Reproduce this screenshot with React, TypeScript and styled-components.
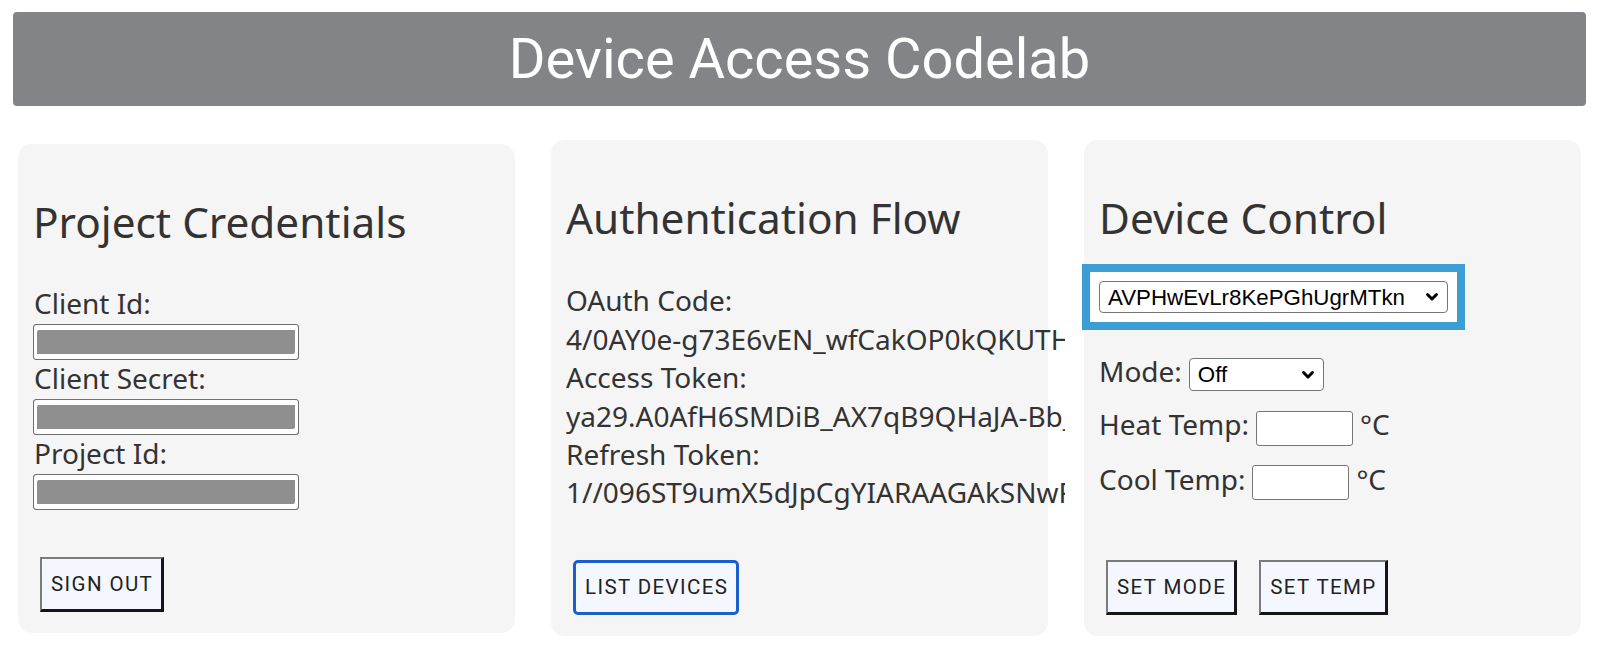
import React from "react";
import styled, { createGlobalStyle } from "styled-components";

const GlobalStyle = createGlobalStyle`
  html, body {
    margin: 0;
    padding: 0;
    background: #ffffff;
  }
  body {
    font-family: "Noto Sans", "Open Sans", sans-serif;
    color: #333333;
  }
`;

const Page = styled.div`
  width: 1600px;
  height: 651px;
  overflow: hidden;
  box-sizing: border-box;
  padding-top: 12px;
`;

const Header = styled.header`
  margin: 0 14px 0 13px;
  height: 94px;
  background: #838488;
  border-radius: 4px;
  display: flex;
  align-items: center;
  justify-content: center;
`;

const HeaderTitle = styled.h1`
  margin: 0;
  font-family: Roboto, "Liberation Sans", sans-serif;
  font-weight: 400;
  font-size: 56px;
  color: #ffffff;
`;

const Columns = styled.main`
  display: flex;
  justify-content: space-between;
  align-items: center;
  padding: 0 19px 0 18px;
  margin-top: 34px;
`;

const Card = styled.section`
  width: 497px;
  box-sizing: border-box;
  background: #f5f5f5;
  border-radius: 14px;
  padding: 16px 15px 21px 15px;
`;

const CardTitle = styled.h2`
  margin: 33px 0 35px;
  font-size: 42.3px;
  font-weight: 400;
  line-height: normal;
  color: #333333;
  white-space: nowrap;
`;

const FieldLabel = styled.div`
  font-size: 28px;
  line-height: 37px;
  padding-left: 1px;
`;

const RedactedInput = styled.input`
  display: block;
  width: 266px;
  height: 36px;
  box-sizing: border-box;
  margin: 2px 0 0;
  padding: 0;
  border: 1px solid #6e6e6e;
  border-radius: 3px;
  background: #8f8f8f;
  box-shadow: inset 3px 5px 0 #ffffff, inset -3px -5px 0 #ffffff;
  outline: none;
`;

const TokenList = styled.div`
  width: 499px;
  overflow: hidden;
  font-size: 28px;
  line-height: 38.4px;
  white-space: nowrap;
`;

const TokenLine = styled.div``;

const Actions = styled.div<{ $top: number }>`
  display: flex;
  gap: 22px;
  margin-top: ${(p) => p.$top}px;
  padding-left: 7px;
`;

const ActionButton = styled.button<{ $focused?: boolean }>`
  height: 55px;
  box-sizing: border-box;
  padding: 0 8px 0 9px;
  font-family: Roboto, "Liberation Sans", sans-serif;
  font-size: 20.5px;
  font-weight: 400;
  letter-spacing: 1.4px;
  text-transform: uppercase;
  color: #222222;
  background: #f4f7fe;
  border-style: solid;
  border-width: ${(p) => (p.$focused ? "3px" : "2px 3px 3px 2px")};
  border-color: ${(p) =>
    p.$focused ? "#1b5fcd" : "#7b7b7b #141414 #141414 #7b7b7b"};
  border-radius: ${(p) => (p.$focused ? "5px" : "0")};
  cursor: pointer;
`;

const SelectWrap = styled.div<{ $width: number; $highlight?: boolean }>`
  position: relative;
  display: inline-block;
  width: ${(p) => p.$width}px;
  border-radius: ${(p) => (p.$highlight ? "0" : "4px")};
  background: ${(p) => (p.$highlight ? "#ffffff" : "transparent")};
  box-shadow: ${(p) =>
    p.$highlight ? "0 0 0 9px #ffffff, 0 0 0 17px #3c9ed5" : "none"};
`;

const NativeSelect = styled.select<{ $height: number }>`
  appearance: none;
  -webkit-appearance: none;
  display: block;
  width: 100%;
  height: ${(p) => p.$height}px;
  box-sizing: border-box;
  margin: 0;
  padding: 0 30px 0 8px;
  font-family: "Liberation Sans", Arial, sans-serif;
  font-size: 22.3px;
  color: #000000;
  background: #ffffff;
  border: 1px solid #767676;
  border-radius: 4px;
  outline: none;
`;

const Chevron = styled.svg`
  position: absolute;
  right: 9px;
  top: 50%;
  transform: translateY(-50%);
  pointer-events: none;
`;

const DeviceSlot = styled.div`
  margin-top: 1px;
`;

const ControlStack = styled.div`
  display: flex;
  flex-direction: column;
  gap: 14px;
  margin-top: 39px;
`;

const ControlRow = styled.div`
  display: flex;
  align-items: baseline;
  gap: 7px;
  font-size: 28px;
  line-height: normal;
`;

const TempInput = styled.input`
  width: 97px;
  height: 35px;
  box-sizing: border-box;
  margin: 0;
  padding: 0 4px;
  font-family: "Liberation Sans", Arial, sans-serif;
  font-size: 22.3px;
  border: 1px solid #767676;
  border-radius: 3px;
  background: #ffffff;
  outline: none;
`;

const Select = ({
  width,
  height,
  value,
  highlight,
}: {
  width: number;
  height: number;
  value: string;
  highlight?: boolean;
}) => (
  <SelectWrap $width={width} $highlight={highlight}>
    <NativeSelect $height={height} defaultValue={value}>
      <option value={value}>{value}</option>
    </NativeSelect>
    <Chevron width="14" height="10" viewBox="0 0 14 10">
      <path
        d="M2.5 2.5 L7 7 L11.5 2.5"
        fill="none"
        stroke="#000"
        strokeWidth="3"
        strokeLinecap="round"
        strokeLinejoin="round"
      />
    </Chevron>
  </SelectWrap>
);

export default function App() {
  return (
    <Page>
      <GlobalStyle />
      <Header>
        <HeaderTitle>Device Access Codelab</HeaderTitle>
      </Header>
      <Columns>
        <Card>
          <CardTitle>Project Credentials</CardTitle>
          <FieldLabel>Client Id:</FieldLabel>
          <RedactedInput readOnly aria-label="Client Id" />
          <FieldLabel>Client Secret:</FieldLabel>
          <RedactedInput readOnly aria-label="Client Secret" />
          <FieldLabel>Project Id:</FieldLabel>
          <RedactedInput readOnly aria-label="Project Id" />
          <Actions $top={47}>
            <ActionButton>Sign Out</ActionButton>
          </Actions>
        </Card>

        <Card>
          <CardTitle>Authentication Flow</CardTitle>
          <TokenList>
            <TokenLine>OAuth Code:</TokenLine>
            <TokenLine>4/0AY0e-g73E6vEN_wfCakOP0kQKUTHq8Zr3xWm2LpVb</TokenLine>
            <TokenLine>Access Token:</TokenLine>
            <TokenLine>ya29.A0AfH6SMDiB_AX7qB9QHaJA-Bb_Kx4tPn2wQz7</TokenLine>
            <TokenLine>Refresh Token:</TokenLine>
            <TokenLine>1//096ST9umX5dJpCgYIARAAGAkSNwF-L9IrqWx3mK</TokenLine>
          </TokenList>
          <Actions $top={48}>
            <ActionButton $focused>List Devices</ActionButton>
          </Actions>
        </Card>

        <Card>
          <CardTitle>Device Control</CardTitle>
          <DeviceSlot>
            <Select width={349} height={32} value="AVPHwEvLr8KePGhUgrMTkn" highlight />
          </DeviceSlot>
          <ControlStack>
            <ControlRow>
              <span>Mode:</span>
              <Select width={135} height={33} value="Off" />
            </ControlRow>
            <ControlRow>
              <span>Heat Temp:</span>
              <TempInput aria-label="Heat Temp" />
              <span>°C</span>
            </ControlRow>
            <ControlRow>
              <span>Cool Temp:</span>
              <TempInput aria-label="Cool Temp" />
              <span>°C</span>
            </ControlRow>
          </ControlStack>
          <Actions $top={60}>
            <ActionButton>Set Mode</ActionButton>
            <ActionButton>Set Temp</ActionButton>
          </Actions>
        </Card>
      </Columns>
    </Page>
  );
}
